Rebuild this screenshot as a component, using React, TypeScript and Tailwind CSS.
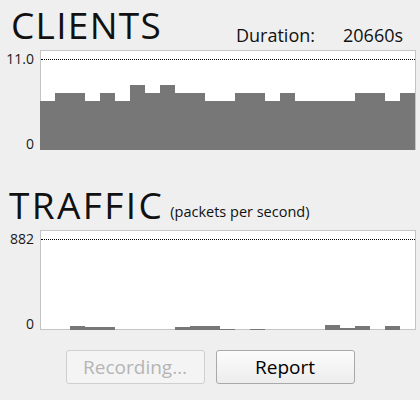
const clients = [6, 7, 7, 6, 7, 6, 8, 7, 8, 7, 7, 6, 6, 7, 7, 6, 7, 6, 6, 6, 6, 7, 7, 6, 7];
const clientHeights: Record<number, number> = { 6: 49, 7: 57, 8: 65 };

// pixel heights of the packet bars, one per 15px slot
const traffic = [0, 0, 4, 3, 3, 0, 0, 0, 0, 3, 4, 4, 1, 0, 1, 0, 0, 0, 0, 5, 2, 4, 0, 4, 0];

function Chart({ top, bars }: { top: string; bars: number[] }) {
  return (
    <div className="flex h-[100px]">
      <div className="flex w-[40px] flex-col items-end pr-[6px] text-[14px] leading-none text-[#1a1a1a]">
        <span className="mt-[2px]">{top}</span>
        <span className="mt-auto -mb-[1px]">0</span>
      </div>
      <div className="relative flex h-[100px] w-[376px] items-end bg-white shadow-[inset_0_0_0_1px_#c4c4c4]">
        <div className="absolute left-px right-px top-[9px] border-t border-dotted border-black" />
        {bars.map((h, i) => (
          <div key={i} className="w-[15px] bg-[#777777]" style={{ height: h }} />
        ))}
      </div>
    </div>
  );
}

export default function App() {
  return (
    <div className="h-[400px] w-[420px] bg-[#efefef] font-['Open_Sans',sans-serif] text-[#111]">
      <div className="flex h-[50px] items-start">
        <div className="mt-[6px] w-[236px] pl-[11px] text-[37px] leading-none tracking-[1.3px]">CLIENTS</div>
        <div className="mt-[26px] w-[107px] text-[18px] leading-none">Duration:</div>
        <div className="mt-[26px] text-[18px] leading-none">20660s</div>
      </div>

      <Chart top="11.0" bars={clients.map((c) => clientHeights[c])} />

      <div className="flex h-[80px] items-start">
        <div className="mt-[36px] pl-[9px] text-[37px] leading-none tracking-[2.4px]">TRAFFIC</div>
        <div className="ml-[6px] mt-[55px] text-[14.5px] leading-none">(packets per second)</div>
      </div>

      <Chart top="882" bars={traffic} />

      <div className="flex justify-center gap-[11px] pt-[20px]">
        <button
          disabled
          className="h-[34px] w-[139px] rounded-[3px] border border-[#cfcfcf] bg-[#f4f4f4] text-[19px] text-[#b5b5b5]"
        >
          Recording…
        </button>
        <button className="h-[34px] w-[139px] rounded-[3px] border border-[#a9a9a9] bg-gradient-to-b from-[#fcfcfc] to-[#ececec] text-[19px] text-black">
          Report
        </button>
      </div>
    </div>
  );
}
